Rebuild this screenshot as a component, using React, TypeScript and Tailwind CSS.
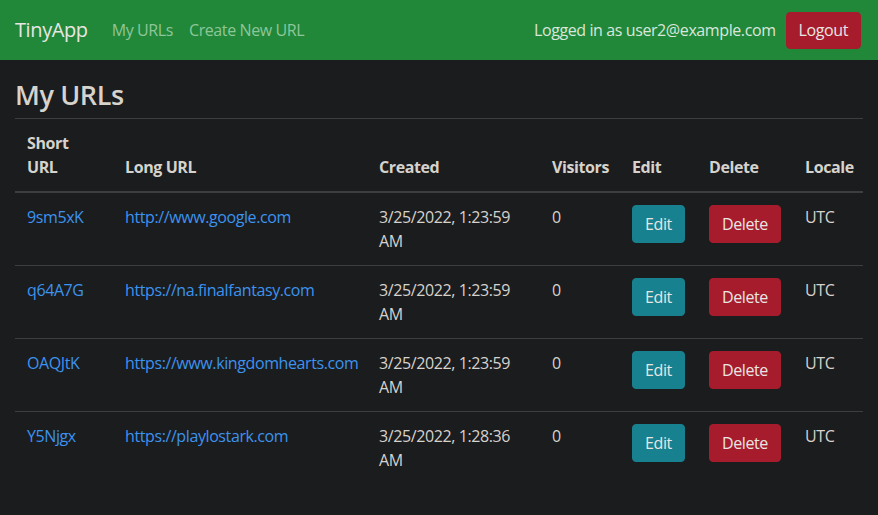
const urls = [
  { id: "9sm5xK", long: "http://www.google.com", created: "3/25/2022, 1:23:59 AM" },
  { id: "q64A7G", long: "https://na.finalfantasy.com", created: "3/25/2022, 1:23:59 AM" },
  { id: "OAQJtK", long: "https://www.kingdomhearts.com", created: "3/25/2022, 1:23:59 AM" },
  { id: "Y5Njgx", long: "https://playlostark.com", created: "3/25/2022, 1:28:36 AM" },
];

export default function App() {
  return (
    <div className="min-h-[515px] bg-[#1b1c1e] text-[#d6d2cc] text-base leading-6 tracking-[-0.4px] [font-family:'Open_Sans',sans-serif]">
      {/* Navbar */}
      <nav className="h-[60px] bg-[#21883a] flex items-center pl-[15px] pr-[17px]">
        <a className="text-[20px] text-[#e8e6e3] mr-[24px]">TinyApp</a>
        <a className="text-[#8fc699] mr-[16px]">My URLs</a>
        <a className="text-[#8fc699]">Create New URL</a>
        <div className="ml-auto flex items-center gap-[10px]">
          <span className="text-[#d9e6dc]">Logged in as user2@example.com</span>
          <button className="h-[37px] px-[12px] rounded-[4px] bg-[#a61c2c] border border-[#a61c2c] text-[#e8e6e3]">
            Logout
          </button>
        </div>
      </nav>

      <main className="px-[15px]">
        <h2 className="text-[27px] font-semibold leading-[1.2] pt-[19px] pb-[7px] text-[#d6d2cc]">My URLs</h2>

        <table className="w-[848px] table-fixed border-collapse text-left">
          <colgroup>
            <col className="w-[98px]" />
            <col className="w-[254px]" />
            <col className="w-[173px]" />
            <col className="w-[80px]" />
            <col className="w-[77px]" />
            <col className="w-[96px]" />
            <col className="w-[70px]" />
          </colgroup>
          <thead>
            <tr className="align-bottom">
              {["Short URL", "Long URL", "Created", "Visitors", "Edit", "Delete", "Locale"].map((h) => (
                <th
                  key={h}
                  className="p-[12px] font-bold border-t border-t-[#3b3f42] border-b-2 border-b-[#3b3f42]"
                >
                  {h}
                </th>
              ))}
            </tr>
          </thead>
          <tbody>
            {urls.map((u, i) => (
              <tr key={u.id} className="align-top">
                <td className={`p-[12px] ${i > 0 ? "border-t border-[#3b3f42]" : ""}`}>
                  <a className="text-[#3c93ee]">{u.id}</a>
                </td>
                <td className={`p-[12px] ${i > 0 ? "border-t border-[#3b3f42]" : ""}`}>
                  <a className="text-[#3c93ee]">{u.long}</a>
                </td>
                <td className={`p-[12px] ${i > 0 ? "border-t border-[#3b3f42]" : ""}`}>{u.created}</td>
                <td className={`p-[12px] ${i > 0 ? "border-t border-[#3b3f42]" : ""}`}>0</td>
                <td className={`p-[12px] ${i > 0 ? "border-t border-[#3b3f42]" : ""}`}>
                  <button className="h-[38px] px-[12px] rounded-[4px] bg-[#17818f] border border-[#17818f] text-[#e8e6e3]">
                    Edit
                  </button>
                </td>
                <td className={`p-[12px] ${i > 0 ? "border-t border-[#3b3f42]" : ""}`}>
                  <button className="h-[38px] px-[12px] rounded-[4px] bg-[#a61c2c] border border-[#a61c2c] text-[#e8e6e3]">
                    Delete
                  </button>
                </td>
                <td className={`p-[12px] ${i > 0 ? "border-t border-[#3b3f42]" : ""}`}>UTC</td>
              </tr>
            ))}
          </tbody>
        </table>
      </main>
    </div>
  );
}
